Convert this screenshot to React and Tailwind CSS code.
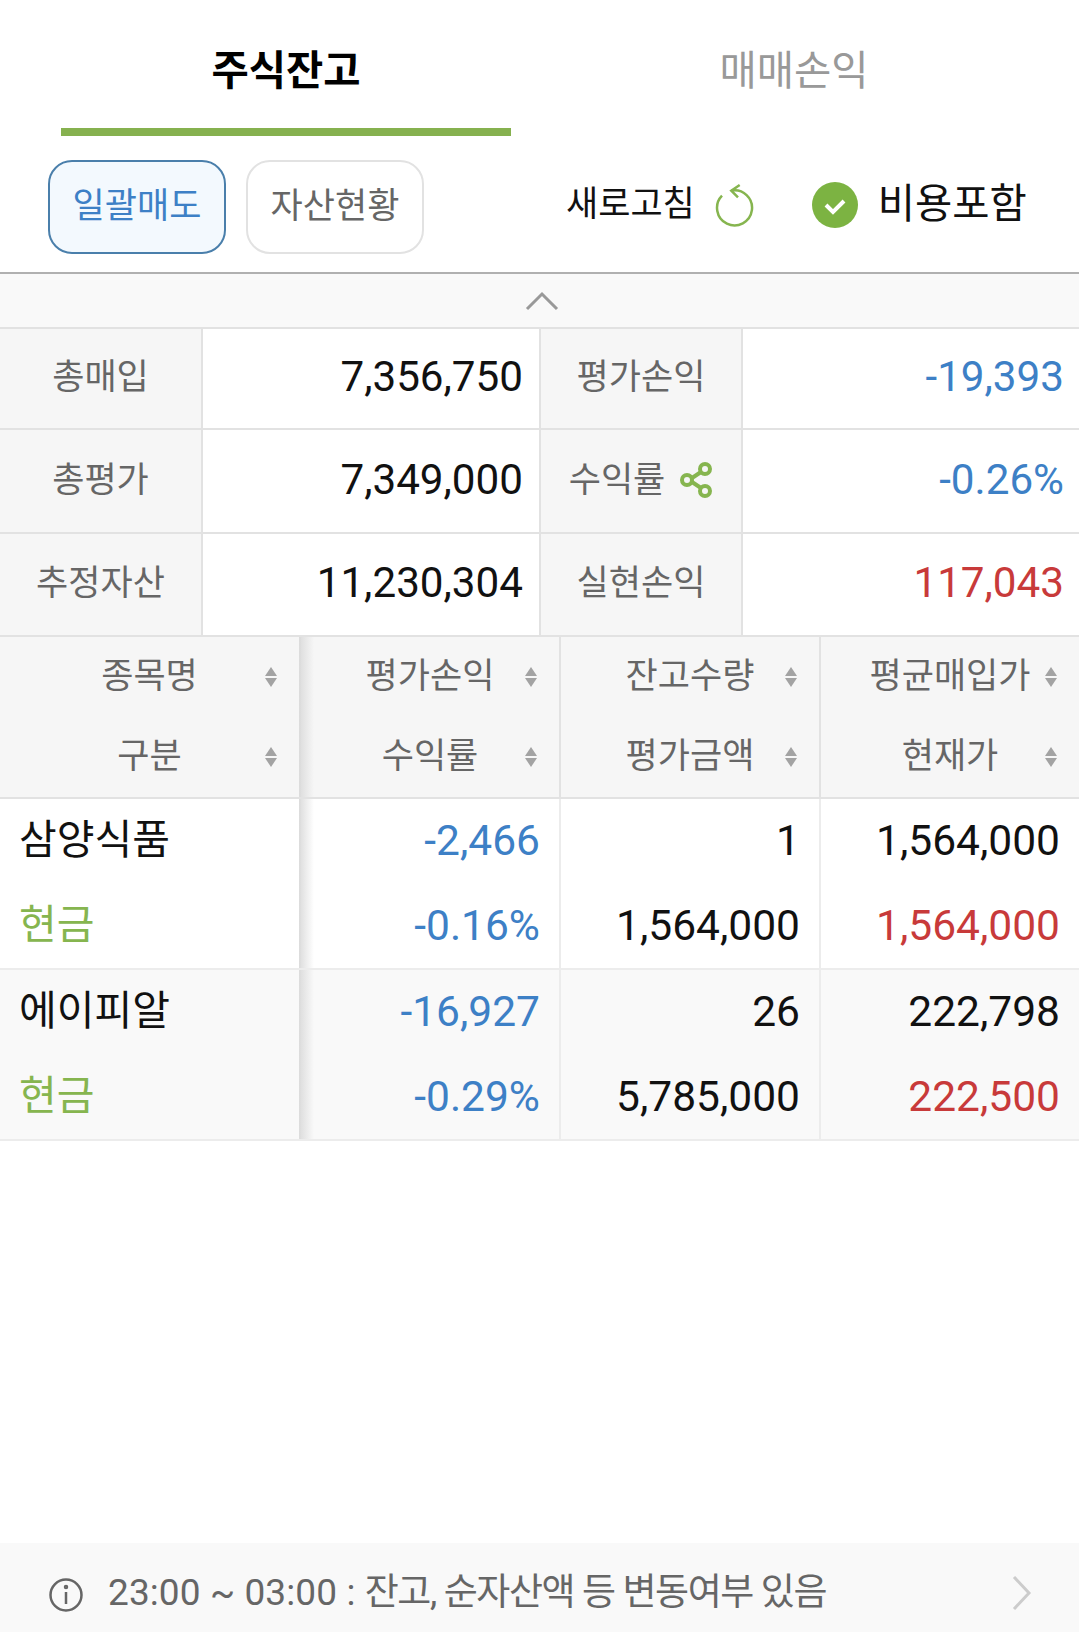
const FONT = 'font-[Roboto,"Noto_Sans_CJK_KR",sans-serif]';

const SUMMARY = [
  { label: '총매입', value: '7,356,750', label2: '평가손익', value2: '-19,393', color: 'text-[#3d80c6]', h: 'h-[101px]' },
  { label: '총평가', value: '7,349,000', label2: '수익률', value2: '-0.26%', color: 'text-[#3d80c6]', h: 'h-[104px]', share: true },
  { label: '추정자산', value: '11,230,304', label2: '실현손익', value2: '117,043', color: 'text-[#c83a3a]', h: 'h-[103px]' },
];

const HEAD = [
  ['종목명', '구분'],
  ['평가손익', '수익률'],
  ['잔고수량', '평가금액'],
  ['평균매입가', '현재가'],
];

const ROWS = [
  { name: '삼양식품', pl: '-2,466', rate: '-0.16%', qty: '1', amount: '1,564,000', avg: '1,564,000', price: '1,564,000', bg: 'bg-white' },
  { name: '에이피알', pl: '-16,927', rate: '-0.29%', qty: '26', amount: '5,785,000', avg: '222,798', price: '222,500', bg: 'bg-[#f9f9f9]' },
];

function SortIcon() {
  return (
    <svg width="14" height="22" viewBox="0 0 14 22" className="justify-self-end mr-[21px]">
      <path d="M7 1l6 9H1z" fill="#a3a3a3" />
      <path d="M7 21l6-9H1z" fill="#a3a3a3" />
    </svg>
  );
}

function ShareIcon() {
  return (
    <svg width="34" height="38" viewBox="0 0 34 38" fill="none" stroke="#86b54f" strokeWidth="4" className="mb-[2px]">
      <path d="M10 19L25 9M10 19l15 10" />
      <circle cx="8" cy="19" r="5" fill="#f6f6f6" />
      <circle cx="26" cy="8" r="5" fill="#f6f6f6" />
      <circle cx="26" cy="30" r="5" fill="#f6f6f6" />
    </svg>
  );
}

function SummaryRow({ row }) {
  return (
    <div className={`grid grid-cols-[203px_336px_204px_336px] border-b-2 border-[#e2e2e2] ${row.h}`}>
      <div className="flex items-center justify-center bg-[#f6f6f6] border-r-2 border-[#e2e2e2] text-[35px] text-[#666]">
        {row.label}
      </div>
      <div className="flex items-center justify-end pb-[3px] pr-[16px] text-[42.2px] text-[#111]">{row.value}</div>
      <div className="flex items-center justify-center gap-[14px] bg-[#f6f6f6] border-x-2 border-[#e2e2e2] text-[35px] text-[#666]">
        {row.label2}
        {row.share && <ShareIcon />}
      </div>
      <div className={`flex items-center justify-end pb-[3px] pr-[15px] text-[42.2px] ${row.color}`}>{row.value2}</div>
    </div>
  );
}

function HeadCell({ lines, first }) {
  return (
    <div className={`relative flex flex-col bg-[#f6f6f6] ${first ? '' : 'border-l-2 border-[#e2e2e2]'}`}>
      {lines.map((text) => (
        <div key={text} className="grid h-[80px] grid-cols-[1fr_auto_1fr] items-center text-[35px] text-[#666]">
          <span />
          <span>{text}</span>
          <SortIcon />
        </div>
      ))}
    </div>
  );
}

function NumCell({ top, bottom, topColor, bottomColor, bg }) {
  return (
    <div className={`flex flex-col border-l-2 border-[#ececec] pr-[19px] text-right text-[42.5px] ${bg}`}>
      <div className={`h-[85px] pt-[10px] ${topColor}`}>{top}</div>
      <div className={`h-[84px] pt-[10px] ${bottomColor}`}>{bottom}</div>
    </div>
  );
}

function ColShadow() {
  return <div className="absolute inset-y-0 left-0 w-[15px] bg-gradient-to-r from-[#dcdcdc] to-transparent" />;
}

export default function App() {
  return (
    <div className={`flex h-[1632px] w-[1079px] flex-col bg-white ${FONT}`}>
      <div className="grid h-[136px] grid-cols-[540px_539px]">
        <div className="ml-[61px] mr-[29px] flex items-center justify-center border-b-8 border-[#86b14f] pt-[15px] text-[40.5px] font-bold text-black">
          주식잔고
        </div>
        <div className="flex items-center justify-center pr-[31px] pt-[7px] text-[40.5px] text-[#999]">매매손익</div>
      </div>

      <div className="flex h-[138px] items-start border-b-2 border-[#b0b0b0] pl-[48px] pt-[24px]">
        <button className="h-[94px] w-[178px] rounded-[24px] border-2 border-[#4a7fab] bg-[#f3f9fe] text-[35px] text-[#3d80c6]">
          일괄매도
        </button>
        <button className="ml-[20px] h-[94px] w-[178px] rounded-[24px] border-2 border-[#e2e2e2] bg-white text-[35px] text-[#666]">
          자산현황
        </button>
        <span className="ml-[142px] mt-[19px] text-[35px] text-[#111]">새로고침</span>
        <svg width="40" height="46" viewBox="0 0 40 46" fill="none" stroke="#86b54f" strokeWidth="2.5" className="ml-[19px] mt-[22px]">
          <path d="M17.3 8.7A17.5 17.5 0 1 1 8 13.7" />
          <path d="M25.7 3l-8.4 5.7 6.7 6.6" />
        </svg>
        <svg width="46" height="48" viewBox="0 0 46 48" className="ml-[58px] mt-[21px]">
          <circle cx="23" cy="24" r="23" fill="#7cb342" />
          <path d="M14 24l7 7 11-11" fill="none" stroke="#fff" strokeWidth="4" />
        </svg>
        <span className="ml-[20px] mt-[14px] text-[40.5px] text-[#111]">비용포함</span>
      </div>

      <div className="flex h-[55px] items-center justify-center border-b-2 border-[#e2e2e2] bg-[#f9f9f9] pl-[4px]">
        <svg width="34" height="20" viewBox="0 0 34 20" fill="none" stroke="#999" strokeWidth="3">
          <path d="M2 18L17 3l15 15" />
        </svg>
      </div>

      {SUMMARY.map((row) => (
        <SummaryRow key={row.label} row={row} />
      ))}

      <div className="grid grid-cols-[299px_260px_260px_260px] border-b-2 border-[#e2e2e2]">
        {HEAD.map((lines, i) => (
          <div key={lines[0]} className="relative">
            <HeadCell lines={lines} first={i === 0} />
            {i === 1 && <ColShadow />}
          </div>
        ))}
      </div>

      {ROWS.map((row) => (
        <div key={row.name} className="grid grid-cols-[299px_260px_260px_260px] border-b-2 border-[#ececec]">
          <div className={`flex flex-col pl-[19px] text-[41px] ${row.bg}`}>
            <div className="h-[85px] pt-[11px] text-[#111]">{row.name}</div>
            <div className="h-[84px] pt-[11px] text-[#86b54f]">현금</div>
          </div>
          <div className="relative">
            <NumCell top={row.pl} bottom={row.rate} topColor="text-[#3d80c6]" bottomColor="text-[#3d80c6]" bg={row.bg} />
            <ColShadow />
          </div>
          <NumCell top={row.qty} bottom={row.amount} topColor="text-[#111]" bottomColor="text-[#111]" bg={row.bg} />
          <NumCell top={row.avg} bottom={row.price} topColor="text-[#111]" bottomColor="text-[#c83a3a]" bg={row.bg} />
        </div>
      ))}

      <div className="mt-auto flex h-[89px] items-center bg-[#f9f9f9] pl-[49px] pr-[47px] pt-[10px] text-[37px] text-[#666]">
        <svg width="34" height="36" viewBox="0 0 34 36" fill="none" stroke="#666" strokeWidth="2.5" className="mr-[25px] mt-[4px]">
          <circle cx="17" cy="18" r="15.5" />
          <path d="M17 15v12" />
          <circle cx="17" cy="10" r="1" />
        </svg>
        <span className="tracking-[0.1px]">23:00 ~ 03:00 :&nbsp;</span>
        <span className="tracking-[-1.4px]">잔고, 순자산액 등 변동여부 있음</span>
        <svg width="20" height="34" viewBox="0 0 20 34" fill="none" stroke="#ccc" strokeWidth="3" className="ml-auto">
          <path d="M2 1l15 16L2 33" />
        </svg>
      </div>
    </div>
  );
}
